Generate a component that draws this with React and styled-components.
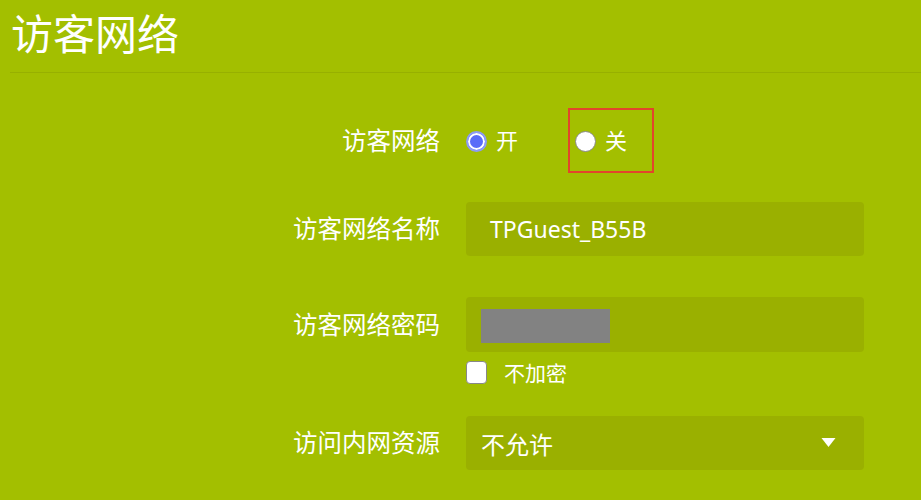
import React, { useState } from "react";
import styled, { createGlobalStyle } from "styled-components";

const GlobalStyle = createGlobalStyle`
  html, body {
    margin: 0;
    padding: 0;
    background: #a3bf00;
  }
  body {
    font-family: "Noto Sans", "Noto Sans CJK SC", sans-serif;
    color: #ffffff;
  }
`;

export default function App() {
  const [enabled, setEnabled] = useState(true);
  const [noPassword, setNoPassword] = useState(false);

  return (
    <>
      <GlobalStyle />
      <Page>
        <Header>访客网络</Header>
        <Form>
          <Row $height={60}>
            <Label>访客网络</Label>
            <RadioGroup>
              <RadioOption onClick={() => setEnabled(true)}>
                <RadioDot $checked={enabled} />
                <OptionText $shift={-1}>开</OptionText>
              </RadioOption>
              <Highlight>
                <RadioOption onClick={() => setEnabled(false)}>
                  <RadioDot $checked={!enabled} />
                  <OptionText $shift={-1}>关</OptionText>
                </RadioOption>
              </Highlight>
            </RadioGroup>
          </Row>

          <Row $height={54} $top={34}>
            <Label>访客网络名称</Label>
            <Field>
              <FieldText>TPGuest_B55B</FieldText>
            </Field>
          </Row>

          <Row $height={55} $top={41}>
            <Label>访客网络密码</Label>
            <Field $pad={15}>
              <Masked />
            </Field>
          </Row>

          <CheckRow>
            <span />
            <CheckOption onClick={() => setNoPassword(!noPassword)}>
              <CheckBox $checked={noPassword} />
              <OptionText $shift={2}>不加密</OptionText>
            </CheckOption>
          </CheckRow>

          <Row $height={54} $top={31}>
            <Label>访问内网资源</Label>
            <Field $pad={15}>
              <FieldText $size={24}>不允许</FieldText>
              <Caret viewBox="0 0 14 10">
                <path d="M0 0 L14 0 L7 9 Z" fill="#ffffff" />
              </Caret>
            </Field>
          </Row>
        </Form>
      </Page>
    </>
  );
}

const Page = styled.div`
  width: 921px;
  height: 500px;
  padding-left: 10px;
  box-sizing: border-box;
  overflow: hidden;
`;

const Header = styled.h1`
  margin: 0;
  height: 73px;
  line-height: 68px;
  padding-left: 1px;
  font-size: 42px;
  font-weight: 400;
  border-bottom: 1px solid #97b000;
  box-sizing: border-box;
`;

const Form = styled.div`
  display: flex;
  flex-direction: column;
  padding-top: 35px;
`;

const Row = styled.div`
  display: grid;
  grid-template-columns: 430px 398px;
  column-gap: 26px;
  align-items: center;
  height: ${(p) => p.$height}px;
  margin-top: ${(p) => p.$top || 0}px;
`;

const Label = styled.div`
  text-align: right;
  font-size: 24.5px;
  line-height: 30px;
`;

const RadioGroup = styled.div`
  display: flex;
  align-items: center;
  height: 100%;
`;

const RadioOption = styled.label`
  display: flex;
  align-items: center;
  gap: 9px;
  font-size: 22px;
  cursor: pointer;
`;

const OptionText = styled.span`
  line-height: 1;
  margin-top: ${(p) => p.$shift || 0}px;
`;

const RadioDot = styled.span`
  width: 21px;
  height: 21px;
  margin-top: 2px;
  border-radius: 50%;
  box-sizing: border-box;
  background: ${(p) => (p.$checked ? "#5a6cf8" : "#ffffff")};
  border: ${(p) => (p.$checked ? "2px solid #8d9bf4" : "1.5px solid #8a8a8a")};
  box-shadow: ${(p) => (p.$checked ? "inset 0 0 0 2px #ffffff" : "none")};
`;

const Highlight = styled.div`
  margin-left: 50px;
  width: 86px;
  height: 65px;
  border: 2px solid #e2452c;
  box-sizing: border-box;
  display: flex;
  align-items: center;
  padding-left: 5px;
`;

const Field = styled.div`
  height: 100%;
  background: #9ab000;
  border-radius: 4px;
  display: flex;
  align-items: center;
  justify-content: space-between;
  padding: 0 28px 0 ${(p) => p.$pad || 24}px;
  box-sizing: border-box;
`;

const FieldText = styled.span`
  font-size: ${(p) => p.$size || 23}px;
  font-family: "Noto Sans", "Noto Sans CJK SC", sans-serif;
`;

const Masked = styled.div`
  width: 129px;
  height: 34px;
  background: #828282;
  margin-top: 2px;
`;

const CheckRow = styled.div`
  display: grid;
  grid-template-columns: 430px 398px;
  column-gap: 26px;
  margin-top: 8px;
  height: 25px;
`;

const CheckOption = styled.label`
  display: flex;
  align-items: center;
  gap: 17px;
  font-size: 21px;
  cursor: pointer;
`;

const CheckBox = styled.span`
  width: 21px;
  height: 23px;
  border-radius: 4px;
  background: #ffffff;
  border: 1.5px solid #888888;
  box-sizing: border-box;
`;

const Caret = styled.svg`
  width: 15px;
  height: 10px;
`;
